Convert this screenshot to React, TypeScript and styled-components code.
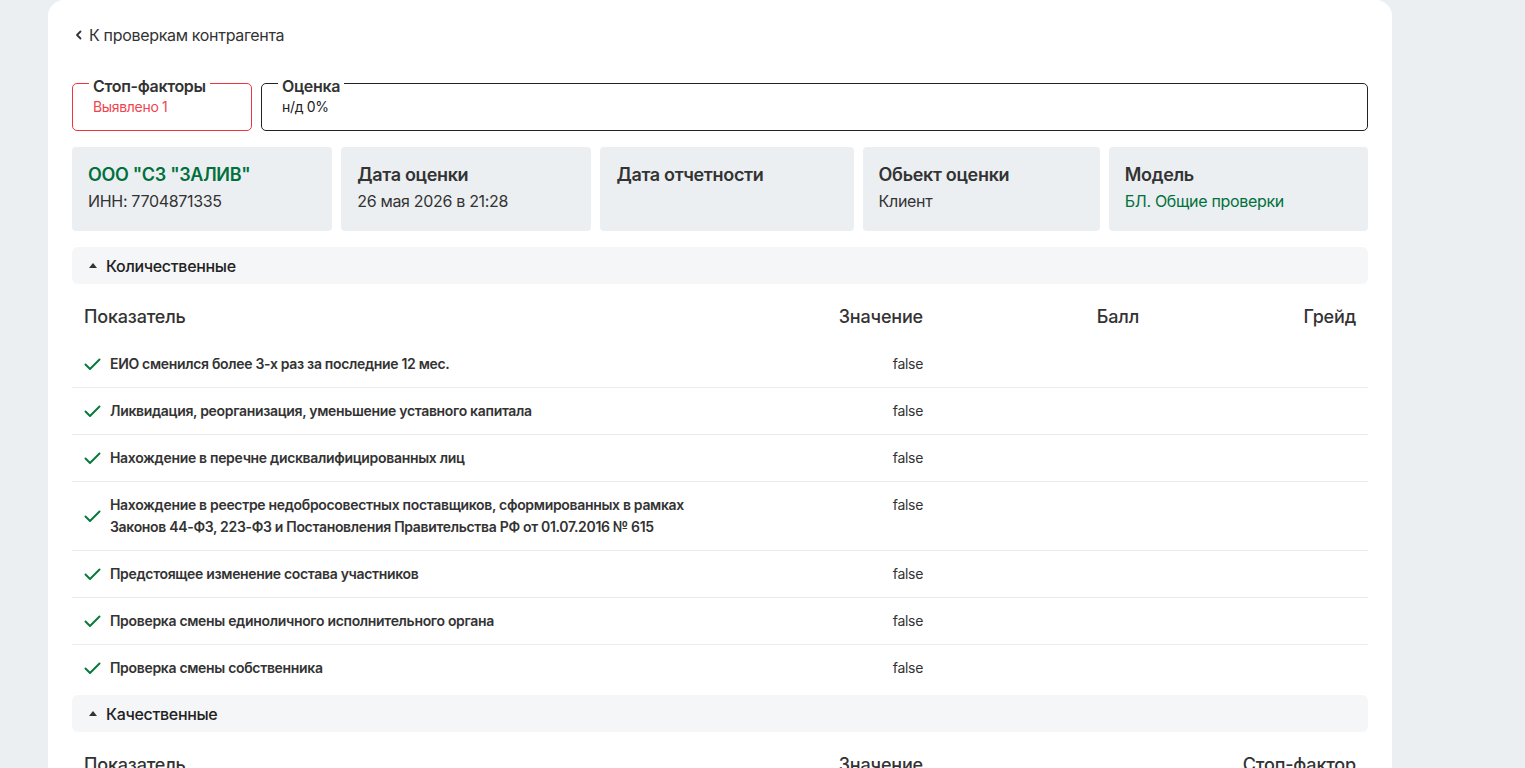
import React from "react";
import styled, { createGlobalStyle } from "styled-components";

const Global = createGlobalStyle`
  html, body { margin: 0; padding: 0; background: #eceff2; }
  body { font-family: Inter, "Noto Sans", sans-serif; color: #333; letter-spacing: -0.02em; }
  * { box-sizing: border-box; }
`;

const Page = styled.div`
  padding-left: 48px;
  width: 1392px;
  height: 768px;
  overflow: hidden;
`;

const Card = styled.main`
  background: #fff;
  border-radius: 16px 16px 0 0;
  padding: 23px 24px 24px;
  min-height: 800px;
  display: flex;
  flex-direction: column;
`;

const BackLink = styled.a`
  display: inline-flex;
  align-items: center;
  gap: 6px;
  font-size: 16px;
  line-height: 24px;
  color: #333;
  text-decoration: none;
  padding-left: 3px;
  align-self: flex-start;
`;

const Fields = styled.div`
  display: flex;
  gap: 9px;
  margin-top: 23px;
`;

const Field = styled.fieldset<{ $tone: "red" | "dark"; $grow?: boolean }>`
  margin: 0;
  border: 1px solid ${(p) => (p.$tone === "red" ? "#ef3340" : "#222")};
  border-radius: 5px;
  padding: 0 16px 13px;
  min-width: 0;
  width: ${(p) => (p.$grow ? "auto" : "180px")};
  flex: ${(p) => (p.$grow ? "1" : "0 0 180px")};
`;

const Legend = styled.legend`
  padding: 6px 4px 0;
  font-size: 16px;
  line-height: 20px;
  font-weight: 600;
  color: #333;
`;

const FieldValue = styled.div<{ $tone: "red" | "dark" }>`
  padding-left: 4px;
  margin-top: 1px;
  font-size: 14px;
  line-height: 20px;
  color: ${(p) => (p.$tone === "red" ? "#f0444f" : "#222")};
`;

const InfoRow = styled.div`
  display: grid;
  grid-template-columns: 260fr 250fr 253fr 237fr 259fr;
  gap: 9px;
  margin-top: 16px;
`;

const InfoCard = styled.div`
  background: #eceff2;
  border-radius: 4px;
  padding: 16px 16px 17px;
  min-height: 84px;
`;

const InfoTitle = styled.div<{ $green?: boolean }>`
  font-size: 18px;
  line-height: 24px;
  font-weight: 600;
  color: ${(p) => (p.$green ? "#00703c" : "#333")};
`;

const InfoText = styled.div<{ $green?: boolean }>`
  margin-top: 2px;
  font-size: 16px;
  line-height: 24px;
  color: ${(p) => (p.$green ? "#00703c" : "#333")};
`;

const Section = styled.section<{ $first?: boolean }>`
  margin-top: ${(p) => (p.$first ? "16px" : "4px")};
`;

const SectionHead = styled.div`
  display: flex;
  align-items: center;
  gap: 9px;
  height: 37px;
  padding-left: 17px;
  background: #f5f6f8;
  border-radius: 6px;
  font-size: 16px;
  font-weight: 500;
  color: #222;
`;

const Table = styled.table`
  width: 100%;
  border-collapse: collapse;
  table-layout: fixed;
  margin-top: 9px;
`;

const Th = styled.th<{ $right?: boolean }>`
  padding: 12px;
  font-size: 18px;
  line-height: 24px;
  font-weight: 500;
  color: #333;
  letter-spacing: -0.01em;
  text-align: ${(p) => (p.$right ? "right" : "left")};
`;

const Tr = styled.tr`
  border-bottom: 1px solid #ececec;
  &:last-child { border-bottom: none; }
`;

const Td = styled.td<{ $right?: boolean }>`
  padding: 12px;
  vertical-align: top;
  font-size: 14px;
  line-height: 22px;
  color: #333;
  text-align: ${(p) => (p.$right ? "right" : "left")};
`;

const NameCell = styled.div`
  display: flex;
  align-items: center;
  gap: 9px;
  font-weight: 600;
  color: #333;
`;

const NameText = styled.span`
  max-width: 590px;
`;

const Check = () => (
  <svg width="17" height="13" viewBox="0 0 17 13" fill="none">
    <path d="M1.5 6.5 L6 11 L15.5 1.5" stroke="#0a7a3c" strokeWidth="2" strokeLinecap="round" strokeLinejoin="round" />
  </svg>
);

const Chevron = () => (
  <svg width="8" height="10" viewBox="0 0 8 10" fill="none">
    <path d="M5.5 1.5 L2 5 L5.5 8.5" stroke="#333" strokeWidth="1.8" strokeLinecap="round" strokeLinejoin="round" />
  </svg>
);

const Triangle = () => (
  <svg width="8" height="5" viewBox="0 0 8 5">
    <path d="M0 5 L4 0 L8 5 Z" fill="#333" />
  </svg>
);

const rows = [
  "ЕИО сменился более 3-х раз за последние 12 мес.",
  "Ликвидация, реорганизация, уменьшение уставного капитала",
  "Нахождение в перечне дисквалифицированных лиц",
  "Нахождение в реестре недобросовестных поставщиков, сформированных в рамках Законов 44-ФЗ, 223-ФЗ и Постановления Правительства РФ от 01.07.2016 № 615",
  "Предстоящее изменение состава участников",
  "Проверка смены единоличного исполнительного органа",
  "Проверка смены собственника",
];

const infos = [
  { title: "ООО \"СЗ \"ЗАЛИВ\"", text: "ИНН: 7704871335", tg: true, vg: false },
  { title: "Дата оценки", text: "26 мая 2026 в 21:28" },
  { title: "Дата отчетности", text: "" },
  { title: "Обьект оценки", text: "Клиент" },
  { title: "Модель", text: "БЛ. Общие проверки", vg: true },
];

export default function App() {
  return (
    <>
      <Global />
      <Page>
        <Card>
          <BackLink href="#">
            <Chevron />
            К проверкам контрагента
          </BackLink>
          <Fields>
            <Field $tone="red">
              <Legend>Стоп-факторы</Legend>
              <FieldValue $tone="red">Выявлено 1</FieldValue>
            </Field>
            <Field $tone="dark" $grow>
              <Legend>Оценка</Legend>
              <FieldValue $tone="dark">н/д 0%</FieldValue>
            </Field>
          </Fields>
          <InfoRow>
            {infos.map((i) => (
              <InfoCard key={i.title}>
                <InfoTitle $green={i.tg}>{i.title}</InfoTitle>
                {i.text && <InfoText $green={i.vg}>{i.text}</InfoText>}
              </InfoCard>
            ))}
          </InfoRow>
          <Section $first>
            <SectionHead>
              <Triangle />
              Количественные
            </SectionHead>
            <Table>
              <colgroup>
                <col style={{ width: 647 }} />
                <col style={{ width: 216 }} />
                <col style={{ width: 216 }} />
                <col />
              </colgroup>
              <thead>
                <tr>
                  <Th>Показатель</Th>
                  <Th $right>Значение</Th>
                  <Th $right>Балл</Th>
                  <Th $right>Грейд</Th>
                </tr>
              </thead>
              <tbody>
                {rows.map((r) => (
                  <Tr key={r}>
                    <Td>
                      <NameCell>
                        <Check />
                        <NameText>{r}</NameText>
                      </NameCell>
                    </Td>
                    <Td $right>false</Td>
                    <Td $right></Td>
                    <Td $right></Td>
                  </Tr>
                ))}
              </tbody>
            </Table>
          </Section>
          <Section>
            <SectionHead>
              <Triangle />
              Качественные
            </SectionHead>
            <Table>
              <colgroup>
                <col style={{ width: 647 }} />
                <col style={{ width: 216 }} />
                <col />
              </colgroup>
              <thead>
                <tr>
                  <Th>Показатель</Th>
                  <Th $right>Значение</Th>
                  <Th $right>Стоп-фактор</Th>
                </tr>
              </thead>
            </Table>
          </Section>
        </Card>
      </Page>
    </>
  );
}
